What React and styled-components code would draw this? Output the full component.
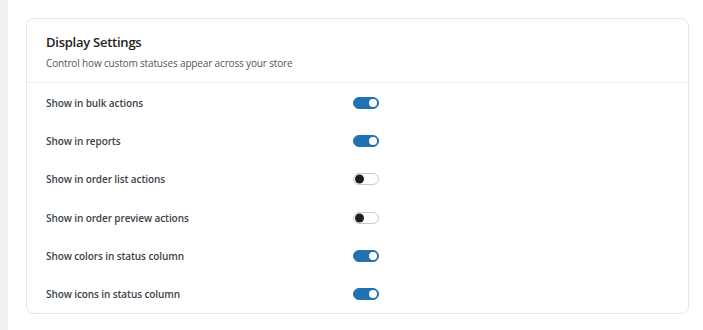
import React, { useState } from "react";
import styled, { createGlobalStyle } from "styled-components";

const Global = createGlobalStyle`
  html, body { margin: 0; padding: 0; background: #fff; }
  body { font-family: "Open Sans", "Noto Sans", sans-serif; }
  * { box-sizing: border-box; }
`;

const Page = styled.div`
  display: flex;
  min-height: 330px;
`;

const SideStrip = styled.div`
  width: 8px;
  background: #f0f0f1;
  flex: none;
`;

const Main = styled.main`
  flex: 1;
  padding: 18px 14px 0 18px;
`;

const Card = styled.section`
  border: 1px solid #e6e6e6;
  border-radius: 8px;
  background: #fff;
`;

const Header = styled.header`
  height: 64px;
  padding: 14px 19px 0;
  border-bottom: 1px solid #efefef;
`;

const Title = styled.h2`
  margin: 0;
  font-size: 13px;
  font-weight: 600;
  color: #1e1e1e;
  line-height: 18px;
  letter-spacing: -0.25px;
`;

const Subtitle = styled.p`
  margin: 4px 0 0;
  font-size: 10px;
  color: #50575e;
  line-height: 16px;
  letter-spacing: -0.15px;
`;

const Rows = styled.div`
  display: flex;
  flex-direction: column;
  padding: 1px 0 0;
`;

const Row = styled.div`
  display: grid;
  grid-template-columns: 307px auto;
  align-items: center;
  height: 38.2px;
  padding: 0 19px;
`;

const Label = styled.span`
  font-size: 10px;
  font-weight: 600;
  color: #3c434a;
  letter-spacing: -0.1px;
`;

const Track = styled.button`
  position: relative;
  width: 26px;
  height: 12px;
  padding: 0;
  border-radius: 6px;
  cursor: pointer;
  border: 1px solid ${(p) => (p.$on ? "#2271b1" : "#c9c9c9")};
  background: ${(p) => (p.$on ? "#2271b1" : "#fff")};
`;

const Knob = styled.span`
  position: absolute;
  top: 50%;
  transform: translateY(-50%);
  width: ${(p) => (p.$on ? "8px" : "9px")};
  height: ${(p) => (p.$on ? "8px" : "9px")};
  border-radius: 50%;
  left: ${(p) => (p.$on ? "15px" : "1px")};
  background: ${(p) => (p.$on ? "#fff" : "#1e1e1e")};
`;

const Toggle = ({ on, onClick }) => (
  <Track $on={on} onClick={onClick} aria-pressed={on}>
    <Knob $on={on} />
  </Track>
);

const initial = [
  ["Show in bulk actions", true],
  ["Show in reports", true],
  ["Show in order list actions", false],
  ["Show in order preview actions", false],
  ["Show colors in status column", true],
  ["Show icons in status column", true],
];

export default function App() {
  const [items, setItems] = useState(initial);
  const flip = (i) =>
    setItems((s) => s.map((it, j) => (j === i ? [it[0], !it[1]] : it)));
  return (
    <>
      <Global />
      <Page>
        <SideStrip />
        <Main>
          <Card>
            <Header>
              <Title>Display Settings</Title>
              <Subtitle>Control how custom statuses appear across your store</Subtitle>
            </Header>
            <Rows>
              {items.map(([label, on], i) => (
                <Row key={label}>
                  <Label>{label}</Label>
                  <Toggle on={on} onClick={() => flip(i)} />
                </Row>
              ))}
            </Rows>
          </Card>
        </Main>
      </Page>
    </>
  );
}
